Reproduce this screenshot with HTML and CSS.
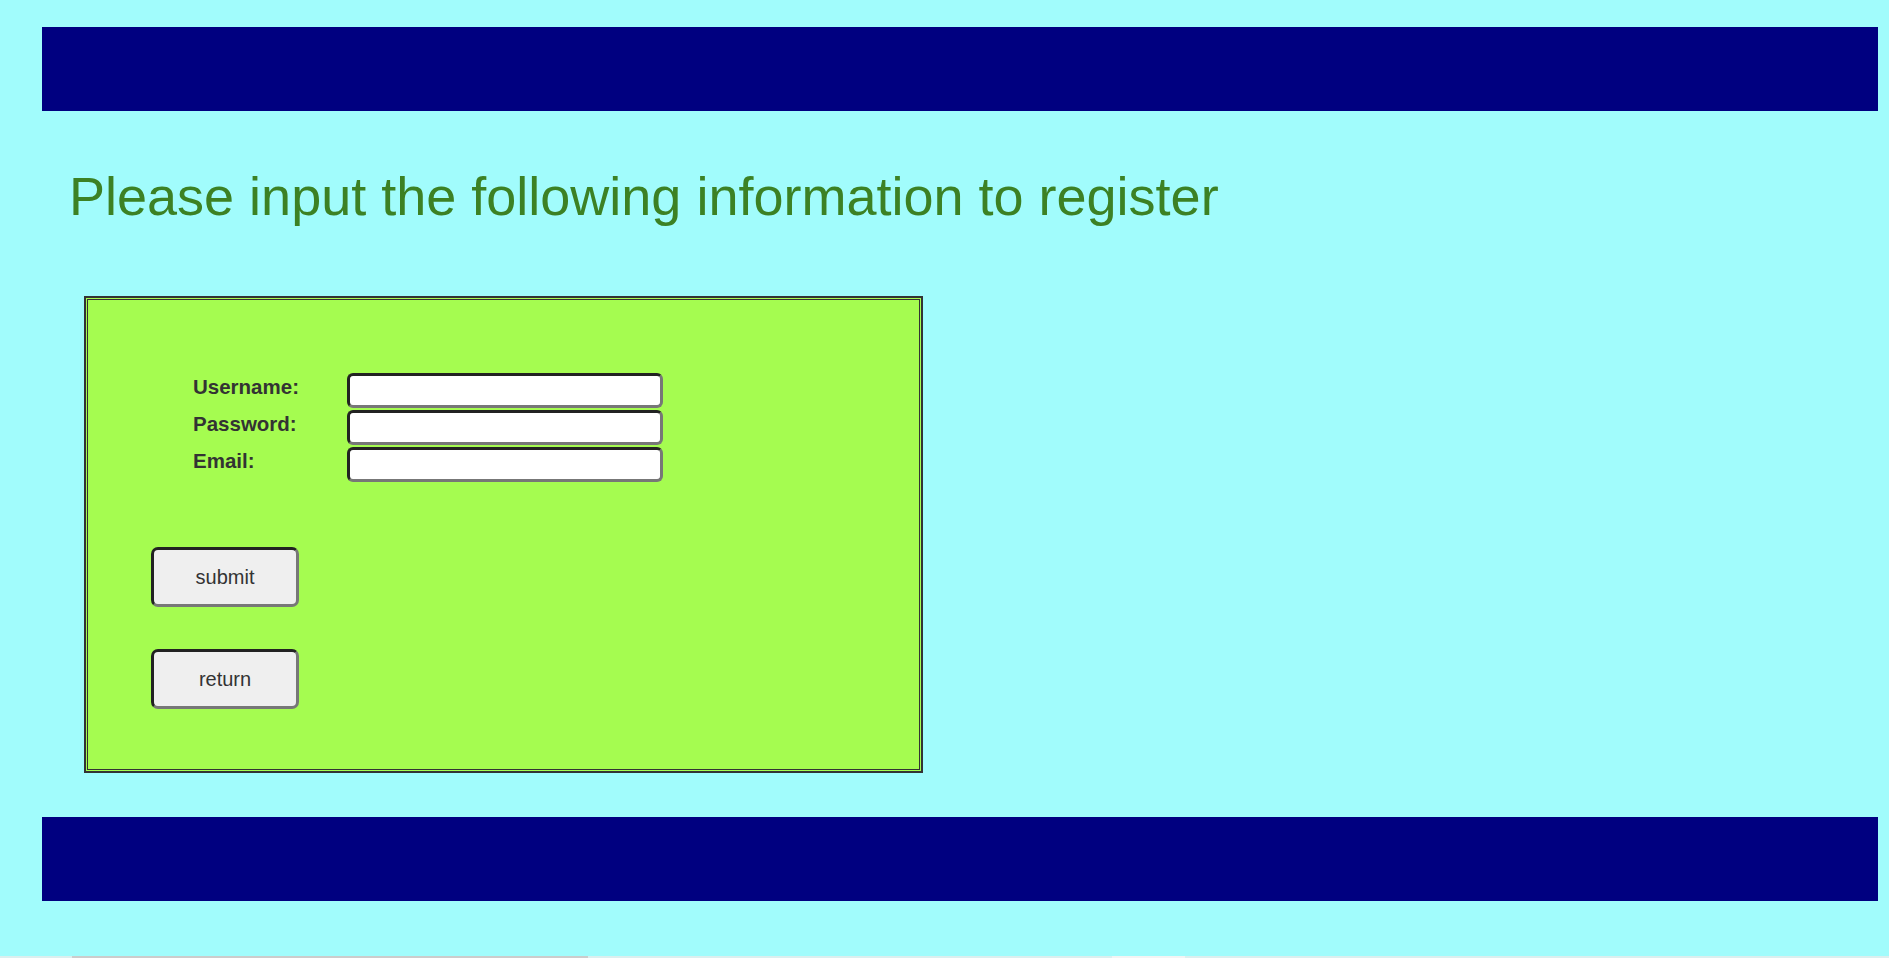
FILE: index.html
```html
<!DOCTYPE html>
<html lang="en">
<head>
<meta charset="utf-8">
<title>Register</title>
<link rel="stylesheet" href="styles.css">
</head>
<body>
  <div class="page">
    <header class="bar bar-top"></header>
    <h1 class="title">Please input the following information to register</h1>
    <div class="panel">
      <form class="reg-form">
        <div class="fields">
          <label class="field-label" for="u">Username:</label>
          <input class="field-input" id="u" type="text">
          <label class="field-label" for="p">Password:</label>
          <input class="field-input" id="p" type="password">
          <label class="field-label" for="e">Email:</label>
          <input class="field-input" id="e" type="text">
        </div>
        <div class="actions">
          <button class="btn" type="button">submit</button>
          <button class="btn" type="button">return</button>
        </div>
      </form>
    </div>
    <footer class="bar bar-bottom"></footer>
    <div class="below">
      <div class="below-gray"></div>
      <div class="below-white"></div>
    </div>
  </div>
</body>
</html>
```
FILE: styles.css
```css
html, body {
  margin: 0;
  padding: 0;
  background: #a1fcfc;
  font-family: "Liberation Sans", Arial, sans-serif;
}

.page {
  display: flex;
  flex-direction: column;
  padding-top: 27px;
}

.bar {
  background: #000080;
  height: 84px;
  margin: 0 11px 0 42px;
}

.title {
  margin: 55px 0 0 69px;
  font-size: 54px;
  font-weight: normal;
  line-height: 60px;
  color: #3c8124;
}

.panel {
  margin: 70px 0 0 84px;
  width: 839px;
  height: 477px;
  box-sizing: border-box;
  background: #a5fc50;
  border: 2px solid #333;
  box-shadow: inset 0 0 0 1px #a5fc50, inset 0 0 0 2px #333;
  padding: 75px 0 0 65px;
}

.reg-form {
  display: flex;
  flex-direction: column;
}

.fields {
  display: grid;
  grid-template-columns: 154px 316px;
  row-gap: 2px;
  margin-left: 42px;
}

.field-label {
  font-size: 20.5px;
  font-weight: bold;
  color: #333;
  line-height: 23px;
  padding-top: 2px;
}

.field-input {
  height: 35px;
  box-sizing: border-box;
  margin: 0;
  background: #fff;
  border: 3px solid;
  border-color: #222 #777 #777 #222;
  border-radius: 6px;
  font-family: inherit;
  font-size: 16px;
}

.actions {
  display: flex;
  flex-direction: column;
  gap: 42px;
  margin-top: 65px;
}

.btn {
  width: 148px;
  height: 60px;
  box-sizing: border-box;
  background: #efefef;
  border: 3px solid;
  border-color: #222 #777 #777 #222;
  border-radius: 7px;
  font-family: inherit;
  font-size: 20px;
  color: #333;
  padding: 0;
}

.bar-bottom {
  margin-top: 44px;
}

.below {
  display: flex;
  height: 20px;
  margin-top: 55px;
  background: #dcefef;
}

.below-gray {
  width: 516px;
  margin-left: 72px;
  background: #cccccc;
}

.below-white {
  width: 73px;
  margin-left: 524px;
  background: #f4f4f4;
}
```
